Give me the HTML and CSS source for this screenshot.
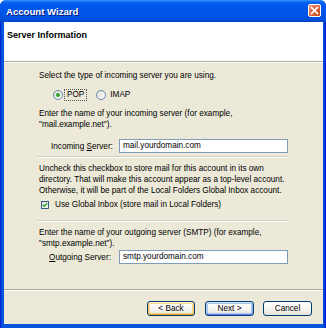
FILE: index.html
```html
<!DOCTYPE html>
<html>
<head>
<meta charset="utf-8">
<link rel="stylesheet" href="styles.css">
</head>
<body>
<div class="window">
  <div class="titlebar">
    <span class="title">Account Wizard</span>
    <span class="close">
      <svg width="13" height="13" viewBox="0 0 13 13"><path d="M3.5 3.5 L9.5 9.5 M9.5 3.5 L3.5 9.5" stroke="#fff" stroke-width="1.6" stroke-linecap="square"/></svg>
    </span>
  </div>
  <div class="client">
    <div class="header">Server Information</div>
    <div class="body">
      <div class="content">
        <p class="text">Select the type of incoming server you are using.</p>
        <div class="radios">
          <span class="radio">
            <svg width="10" height="10" viewBox="0 0 10 10"><defs><linearGradient id="rg" x1="0" y1="0" x2="1" y2="1"><stop offset="0" stop-color="#DCDAD1"/><stop offset="1" stop-color="#FFFFFF"/></linearGradient></defs><circle cx="5" cy="5" r="4.5" fill="url(#rg)" stroke="#5A7FA6" stroke-width="0.9"/><circle cx="5" cy="5" r="2" fill="#2BA52B"/></svg>
            <span class="rlabel focus">POP</span>
          </span>
          <span class="radio">
            <svg width="10" height="10" viewBox="0 0 10 10"><defs><linearGradient id="rg2" x1="0" y1="0" x2="1" y2="1"><stop offset="0" stop-color="#DCDAD1"/><stop offset="1" stop-color="#FFFFFF"/></linearGradient></defs><circle cx="5" cy="5" r="4.5" fill="url(#rg2)" stroke="#5A7FA6" stroke-width="0.9"/></svg>
            <span class="rlabel">IMAP</span>
          </span>
        </div>
        <p class="text gap8">Enter the name of your incoming server (for example,<br>"mail.example.net").</p>
        <div class="field in">
          <span class="flabel">Incoming <u>S</u>erver:</span>
          <span class="input">mail.yourdomain.com</span>
        </div>
        <div class="sep s1"></div>
        <p class="text gap5">Uncheck this checkbox to store mail for this account in its own<br>directory. That will make this account appear as a top-level account.<br>Otherwise, it will be part of the Local Folders Global Inbox account.</p>
        <div class="check">
          <svg width="8" height="8" viewBox="0 0 8 8"><defs><linearGradient id="cg" x1="0" y1="0" x2="1" y2="1"><stop offset="0" stop-color="#DCDAD1"/><stop offset="1" stop-color="#FFFFFF"/></linearGradient></defs><rect x="0.5" y="0.5" width="7" height="7" fill="url(#cg)" stroke="#1C5180" stroke-width="0.9"/><path d="M1.8 3.8 L3.3 5.4 L6.2 2.2" fill="none" stroke="#21A121" stroke-width="1.3"/></svg>
          <span class="clabel">Use Global Inbox (store mail in Local Folders)</span>
        </div>
        <div class="sep s2"></div>
        <p class="text gap5">Enter the name of your outgoing server (SMTP) (for example,<br>"smtp.example.net").</p>
        <div class="field out">
          <span class="flabel"><u>O</u>utgoing Server:</span>
          <span class="input">smtp.yourdomain.com</span>
        </div>
      </div>
      <div class="footer">
        <span class="btn hover">&lt; Back</span>
        <span class="btn default">Next &gt;</span>
        <span class="btn">Cancel</span>
      </div>
    </div>
  </div>
</div>
</body>
</html>
```
FILE: styles.css
```css
* { box-sizing: border-box; margin: 0; padding: 0; }
html, body { width: 326px; height: 328px; overflow: hidden; background: #ffffff; }
body { font-family: "Liberation Sans", Arial, sans-serif; font-size: 8.2px; color: #000; }

.window {
  width: 326px; height: 328px;
  display: flex; flex-direction: column;
  border-radius: 6px 6px 0 0;
  background: linear-gradient(to right, #0019CF 0px, #0855DD 2px, #0855DD 323px, #0019CF 326px);
}

.titlebar {
  height: 22px; flex: none;
  display: flex; align-items: center; justify-content: space-between;
  padding: 0 5px 0 6px;
  border-radius: 6px 6px 0 0;
  background: linear-gradient(to bottom, #3D95FF 0px, #0A66F0 2px, #0058EE 5px, #0054E6 14px, #0050DE 19px, #0044C6 22px);
}
.title {
  color: #fff; font-weight: bold; font-size: 9.6px;
  text-shadow: 1px 1px 0 #0A1A80;
}
.close {
  width: 13px; height: 13px; margin-top: -2px;
  border: 1px solid #fff; border-radius: 2px;
  background: linear-gradient(135deg, #F09A7E 0%, #E06A46 40%, #C9461E 100%);
  display: flex; align-items: center; justify-content: center;
}
.close svg { display: block; margin: -1px; }

.client {
  flex: 1; margin: 0 3px 4px 4px;
  background: #ECE9D8;
  display: flex; flex-direction: column;
}
.header {
  height: 40px; flex: none;
  background: #fff;
  padding: 8px 0 0 3px;
  font-weight: bold; font-size: 9px; line-height: 11px;
  border-bottom: 1px solid #ACA899;
  box-shadow: 0 1px 0 #fff;
}
.body { flex: 1; display: flex; flex-direction: column; padding-top: 8px; }
.content { margin-left: 33px; width: 252px; }

.text { padding-left: 2px; line-height: 11px; white-space: nowrap; }
.gap8 { margin-top: 8px; }
.gap5 { margin-top: 5px; }

.radios { margin-top: 8px; height: 11px; padding-left: 16px; display: flex; align-items: center; gap: 9px; }
.radio { display: flex; align-items: center; gap: 1px; }
.radio svg { display: block; }
.rlabel { line-height: 10px; padding: 0 2px; border: 1px solid transparent; }
.rlabel.focus { border: 1px dotted #555; }

.field { display: flex; align-items: center; height: 14px; }
.field.in { margin-top: 9px; padding-left: 14px; }
.field.out { margin-top: 1px; padding-left: 12px; }
.flabel { width: 68px; }
.field.out .flabel { width: 70px; }
.input {
  width: 169px; height: 14px;
  background: #fff; border: 1px solid #7F9DB9;
  padding-left: 3px; line-height: 12px;
}

.sep { height: 2px; border-top: 1px solid #D2CFC0; border-bottom: 1px solid #FFFFFF; }
.s1 { margin-top: 3px; }
.s2 { margin-top: 10px; }

.check { margin-top: 3px; height: 11px; padding-left: 4px; display: flex; align-items: center; gap: 6px; }
.check svg { display: block; }

.footer {
  margin-top: auto; flex: none;
  border-top: 1px solid #ACA899;
  box-shadow: inset 0 1px 0 #fff;
  padding: 11px 11px 8px 0;
  display: flex; justify-content: flex-end; gap: 9px;
}
.btn {
  width: 49px; height: 15px;
  border: 1px solid #003C74; border-radius: 3px;
  background: linear-gradient(to bottom, #FFFFFF 0%, #F5F4EF 60%, #E3E0D6 100%);
  display: flex; align-items: center; justify-content: center;
  line-height: 11px;
}
.btn.hover { width: 48px; margin-right: 1px; box-shadow: inset 0 1px 0 #FFF0CF, inset 0 -1px 0 #E5A01A, inset 1px 0 0 #FBCA6A, inset -1px 0 0 #FBCA6A, inset 0 0 0 2px #F8D690; }
.btn.default { box-shadow: inset 0 1px 0 #CEE7FF, inset 0 -1px 0 #6982EE, inset 1px 0 0 #BCD4F6, inset -1px 0 0 #89ADE4, inset 0 0 0 2px #A9C4F0; }
```
